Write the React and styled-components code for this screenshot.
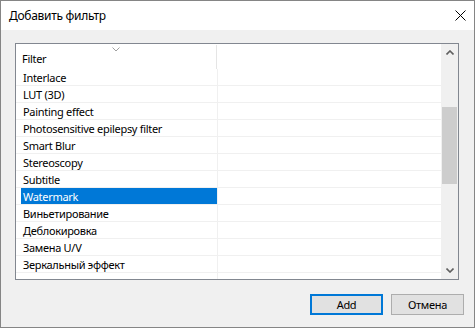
import React from "react";
import styled, { createGlobalStyle } from "styled-components";

const Global = createGlobalStyle`
  html, body { margin: 0; padding: 0; background: #f0f0f0; }
  * { box-sizing: border-box; }
`;

const Window = styled.div`
  width: 475px;
  height: 328px;
  border: 1px solid #858585;
  display: flex;
  flex-direction: column;
  font-family: "Noto Sans", "Segoe UI", sans-serif;
  font-size: 11px;
  letter-spacing: -0.3px;
  color: #000;
  background: #f0f0f0;
`;

const TitleBar = styled.div`
  height: 29px;
  background: #fff;
  display: flex;
  align-items: center;
  justify-content: space-between;
  padding-left: 8px;
  padding-right: 8px;
  flex-shrink: 0;
`;

const Title = styled.span`
  font-size: 12px;
  line-height: 16px;
  padding-top: 1px;
`;

const Close = styled.div`
  width: 12px;
  height: 12px;
  display: flex;
  align-items: center;
  justify-content: center;
`;

const Body = styled.div`
  flex: 1;
  display: flex;
  flex-direction: column;
  padding: 13px 10px 0 14px;
`;

const List = styled.div`
  height: 237px;
  margin-right: 5px;
  border: 1px solid #828790;
  background: #fff;
  display: flex;
  overflow: hidden;
`;

const Content = styled.div`
  flex: 1;
  display: flex;
  flex-direction: column;
  overflow: hidden;
`;

const Header = styled.div`
  height: 25px;
  display: flex;
  flex-shrink: 0;
`;

const HeaderCell = styled.div`
  width: 201px;
  border-right: 1px solid #e5e5e5;
  margin-top: 1px;
  display: flex;
  align-items: center;
  padding-left: 6px;
  padding-top: 3px;
  position: relative;
`;

const SortArrow = styled.svg`
  position: absolute;
  top: 2px;
  left: 96px;
`;

const Row = styled.div`
  height: 17px;
  flex-shrink: 0;
  display: flex;
  border-bottom: 1px solid #f0f0f0;
`;

const Cell = styled.div`
  width: 202px;
  border-right: 1px solid #f0f0f0;
  padding-left: 5px;
  display: flex;
`;

const Label = styled.div`
  flex: 1;
  padding-left: 2px;
  padding-top: 1px;
  line-height: 15px;
  white-space: nowrap;
  background: ${(p) => (p.$selected ? "#0078d7" : "transparent")};
  color: ${(p) => (p.$selected ? "#fff" : "#000")};
`;

const ScrollBar = styled.div`
  width: 17px;
  background: #f0f0f0;
  display: flex;
  flex-direction: column;
  flex-shrink: 0;
`;

const ArrowBox = styled.div`
  height: 17px;
  display: flex;
  align-items: center;
  justify-content: center;
  flex-shrink: 0;
`;

const Track = styled.div`
  flex: 1;
  padding: 46px 1px 0 1px;
`;

const Thumb = styled.div`
  height: 77px;
  background: #cdcdcd;
`;

const Buttons = styled.div`
  display: flex;
  justify-content: flex-end;
  gap: 8px;
  margin-top: 14px;
`;

const Button = styled.div`
  width: 73px;
  height: 21px;
  background: #e1e1e1;
  border: ${(p) => (p.$default ? "2px solid #0078d7" : "1px solid #adadad")};
  display: flex;
  align-items: center;
  justify-content: center;
  font-size: 11px;
`;

const items = [
  "Interlace",
  "LUT (3D)",
  "Painting effect",
  "Photosensitive epilepsy filter",
  "Smart Blur",
  "Stereoscopy",
  "Subtitle",
  "Watermark",
  "Виньетирование",
  "Деблокировка",
  "Замена U/V",
  "Зеркальный эффект",
  "",
];

const Chevron = ({ up }) => (
  <svg width="8" height="5" viewBox="0 0 8 5">
    <polyline
      points={up ? "0.5,4.5 4,1 7.5,4.5" : "0.5,0.5 4,4 7.5,0.5"}
      fill="none"
      stroke="#606060"
      strokeWidth="1.6"
    />
  </svg>
);

export default function App() {
  return (
    <>
      <Global />
      <Window>
        <TitleBar>
          <Title>Добавить фильтр</Title>
          <Close>
            <svg width="11" height="11" viewBox="0 0 11 11">
              <path d="M0.5 0.5 L10.5 10.5 M10.5 0.5 L0.5 10.5" stroke="#000" strokeWidth="1" />
            </svg>
          </Close>
        </TitleBar>
        <Body>
          <List>
            <Content>
              <Header>
                <HeaderCell>
                  <SortArrow width="8" height="5" viewBox="0 0 8 5">
                    <polyline points="0.5,0.5 4,4 7.5,0.5" fill="none" stroke="#a0a0a0" strokeWidth="1" />
                  </SortArrow>
                  Filter
                </HeaderCell>
              </Header>
              {items.map((it, i) => (
                <Row key={i}>
                  <Cell>
                    <Label $selected={it === "Watermark"}>{it}</Label>
                  </Cell>
                </Row>
              ))}
            </Content>
            <ScrollBar>
              <ArrowBox>
                <Chevron up />
              </ArrowBox>
              <Track>
                <Thumb />
              </Track>
              <ArrowBox>
                <Chevron />
              </ArrowBox>
            </ScrollBar>
          </List>
          <Buttons>
            <Button $default>Add</Button>
            <Button>Отмена</Button>
          </Buttons>
        </Body>
      </Window>
    </>
  );
}
